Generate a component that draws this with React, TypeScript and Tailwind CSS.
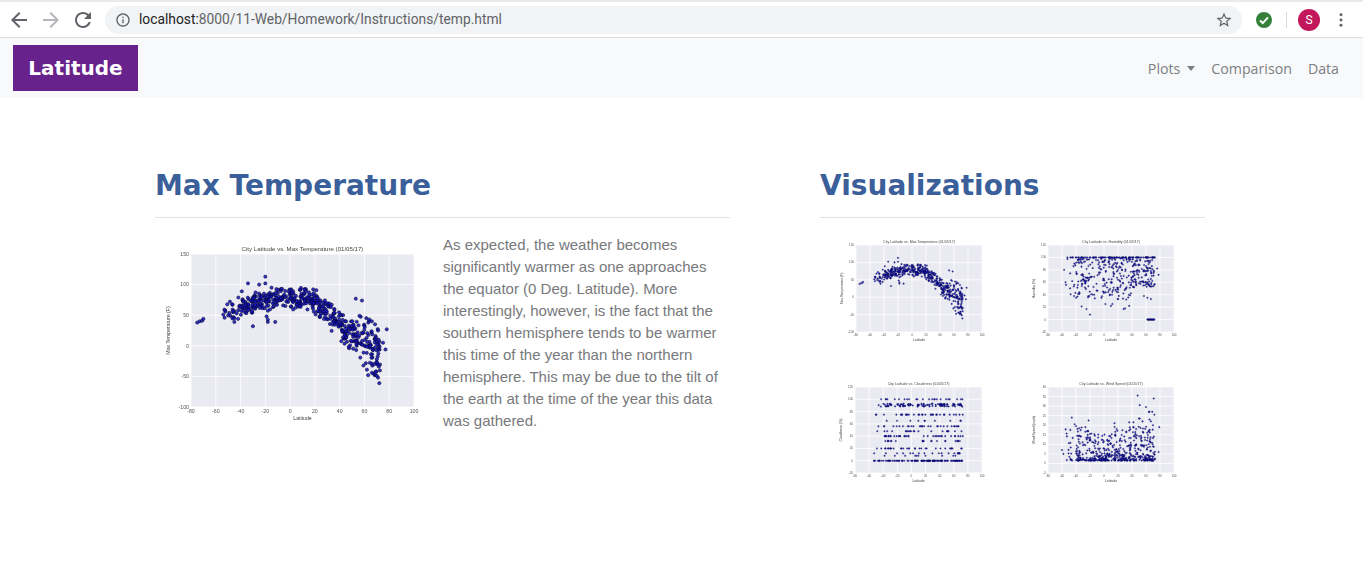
import React from "react";

type Pt = [number, number];

function rng(seed: number) {
  let a = seed * 2654435761;
  return () => {
    a = (a + 0x6d2b79f5) | 0;
    let t = Math.imul(a ^ (a >>> 15), 1 | a);
    t = (t + Math.imul(t ^ (t >>> 7), 61 | t)) ^ t;
    return ((t ^ (t >>> 14)) >>> 0) / 4294967296;
  };
}

function lats(seed: number, n: number): number[] {
  const r = rng(seed);
  const out: number[] = [];
  for (let i = 0; i < n; i++) {
    const u = r();
    let v: number;
    if (u < 0.04) v = -55 + r() * 15;
    else if (u < 0.25) v = -40 + r() * 25;
    else if (u < 0.47) v = -15 + r() * 30;
    else if (u < 0.72) v = 15 + r() * 30;
    else v = 45 + r() * 28;
    out.push(v);
  }
  return out;
}

function curve(x: number): number {
  const a: Pt[] = [[-75, 38], [-60, 50], [-45, 60], [-30, 70], [-15, 75], [0, 78], [15, 76], [25, 66], [35, 46], [45, 27], [55, 14], [65, 3], [72, -15]];
  for (let i = 0; i < a.length - 1; i++) {
    if (x <= a[i + 1][0]) {
      const t = (x - a[i][0]) / (a[i + 1][0] - a[i][0]);
      return a[i][1] + t * (a[i + 1][1] - a[i][1]);
    }
  }
  return -15;
}

function tempData(): Pt[] {
  const r = rng(11);
  const pts: Pt[] = lats(5, 500).map((x) => {
    const spread = x > 55 ? 50 : x > 40 ? 30 : x > 20 ? 26 : 20;
    return [x, curve(x) + (r() + r() - 1) * spread];
  });
  const extra: Pt[] = [[-75, 38], [-73, 40], [-71, 41], [-70, 44], [-46, 55], [-46, 56], [-45, 45], [-45, 39], [-42, 44], [-39, 89], [-34, 102], [-25, 100], [-20, 113], [-20, 102], [-30, 32], [-19, 48], [-18, 43], [-18, 39], [-12, 39], [-15, 95], [53, 77], [58, 74], [56, 49], [64, 43], [66, 40], [78, 27], [77, -6], [75, 5], [72, -61], [71, -52], [70, -49], [69, -42], [66, -44], [63, -48], [62, -39], [70, -27], [70, -22], [71, 25]];
  return pts.concat(extra);
}

function humidityData(): Pt[] {
  const r = rng(23);
  const pts: Pt[] = lats(8, 440).map((x) => {
    const u = r();
    let y: number;
    if (u < 0.2) y = 100;
    else if (x > 40) y = 52 + r() * 46;
    else y = 100 - Math.pow(r(), 1.4) * 68;
    return [x, y];
  });
  for (let i = 0; i < 16; i++) pts.push([62 + (i * 10) / 15, 0]);
  const extra: Pt[] = [[-20, 8], [-25, 17], [-32, 21], [-40, 35], [-38, 37], [-35, 42], [2, 25], [10, 22], [12, 25], [28, 17], [30, 18], [36, 22], [-55, 60], [-57, 80], [-48, 100], [78, 72], [76, 82], [67, 33], [62, 35], [57, 38]];
  return pts.concat(extra);
}

function cloudData(): Pt[] {
  const r = rng(37);
  const rows: [number, number][] = [[0, 0.26], [8, 0.03], [12, 0.03], [20, 0.07], [32, 0.04], [40, 0.08], [48, 0.05], [56, 0.05], [65, 0.03], [75, 0.09], [90, 0.23], [100, 0.04]];
  return lats(17, 440).map((x) => {
    let u = r();
    let y = 0;
    for (const [v, w] of rows) {
      y = v;
      if (u < w) break;
      u -= w;
    }
    return [x, y === 90 ? 88 + r() * 5 : y];
  });
}

function windData(): Pt[] {
  const r = rng(51);
  const pts: Pt[] = lats(29, 520).map((x) => {
    const base = Math.pow(r(), 2.2);
    return [x, 1.5 + base * (x > -15 && x < 15 ? 14 : 18)];
  });
  const extra: Pt[] = [[48, 35.5], [51, 30.5], [60, 29.5], [71, 34], [64, 27], [65, 27], [69, 27], [72, 25.5], [50, 23.5], [51, 23.5], [-46, 24], [-22, 22.5], [15, 21], [36, 21.5], [42, 21.5], [55, 22], [65, 23], [67, 22], [70, 20], [79, 19], [-42, 20.5], [-40, 19.5], [-38, 18], [-60, 7], [-58, 5], [78, 6]];
  return pts.concat(extra);
}

type ChartProps = {
  w: number;
  h: number;
  box: [number, number, number, number];
  xr: [number, number];
  yr: [number, number];
  xt: number[];
  yt: number[];
  title: string;
  xl: string;
  yl: string;
  pts: Pt[];
  r: number;
  fs: number;
  tfs: number;
  lfs: number;
  blurClass: string;
};

function Chart({ w, h, box, xr, yr, xt, yt, title, xl, yl, pts, r, fs, tfs, lfs, blurClass }: ChartProps) {
  const [x0, y0, x1, y1] = box;
  const sx = (v: number) => x0 + ((v - xr[0]) / (xr[1] - xr[0])) * (x1 - x0);
  const sy = (v: number) => y1 - ((v - yr[0]) / (yr[1] - yr[0])) * (y1 - y0);
  const font = "'Liberation Sans', Arial, sans-serif";
  return (
    <svg width={w} height={h} viewBox={`0 0 ${w} ${h}`} className={`block shrink-0 ${blurClass}`}>
      <rect x={x0} y={y0} width={x1 - x0} height={y1 - y0} fill="#eaeaf2" />
      {xt.map((t) => (
        <line key={t} x1={sx(t)} x2={sx(t)} y1={y0} y2={y1} stroke="#ffffff" strokeWidth={0.8} />
      ))}
      {yt.map((t) => (
        <line key={t} x1={x0} x2={x1} y1={sy(t)} y2={sy(t)} stroke="#ffffff" strokeWidth={0.8} />
      ))}
      {pts.map((p, i) => (
        <circle key={i} cx={sx(p[0])} cy={sy(p[1])} r={r} fill="#1414c4" fillOpacity={0.85} stroke="#06062e" strokeWidth={r * 0.35} />
      ))}
      <g fontFamily={font} fill="#555555" fontSize={fs}>
        {xt.map((t) => (
          <text key={t} x={sx(t)} y={y1 + fs + 1} textAnchor="middle">
            {t}
          </text>
        ))}
        {yt.map((t) => (
          <text key={t} x={x0 - 2} y={sy(t) + fs * 0.35} textAnchor="end">
            {t}
          </text>
        ))}
      </g>
      <text x={(x0 + x1) / 2} y={y0 - (tfs > 4 ? 3 : 2)} textAnchor="middle" fontFamily={font} fontSize={tfs} fill="#444444">
        {title}
      </text>
      <text x={(x0 + x1) / 2} y={y1 + fs + lfs + 3} textAnchor="middle" fontFamily={font} fontSize={lfs} fill="#444444">
        {xl}
      </text>
      <text
        transform={`translate(${x0 - fs * 3.6 - 2} ${(y0 + y1) / 2}) rotate(-90)`}
        textAnchor="middle"
        fontFamily={font}
        fontSize={lfs}
        fill="#444444"
      >
        {yl}
      </text>
    </svg>
  );
}

const latTicks = [-80, -60, -40, -20, 0, 20, 40, 60, 80, 100];

function MaterialIcon({ d, className }: { d: string; className: string }) {
  return (
    <svg viewBox="0 0 24 24" className={className} fill="currentColor">
      <path d={d} />
    </svg>
  );
}

export default function App() {
  const temp = tempData();
  const hum = humidityData();
  const cloud = cloudData();
  const wind = windData();
  const small = { w: 180, h: 115, r: 0.8, fs: 3, tfs: 3.6, lfs: 3.4, xr: [-80, 100] as [number, number], xt: latTicks, blurClass: "blur-[0.5px]" };
  return (
    <div className="min-h-[575px] w-[1363px] overflow-hidden bg-white font-['Liberation_Sans',Arial,sans-serif]">
      {/* browser bar */}
      <div className="flex h-[38px] items-center border-t-2 border-b border-t-[#e8eaed] border-b-[#dadce0] bg-white">
        <div className="flex w-[105px] shrink-0 items-center pl-[7px]">
          <MaterialIcon className="h-6 w-6 text-[#5f6368]" d="M20 11H7.83l5.59-5.59L12 4l-8 8 8 8 1.41-1.41L7.83 13H20v-2z" />
          <MaterialIcon className="ml-[8px] h-6 w-6 text-[#b4b6b9]" d="M12 4l-1.41 1.41L16.17 11H4v2h12.17l-5.58 5.59L12 20l8-8z" />
          <MaterialIcon className="ml-[8px] h-6 w-6 text-[#5f6368]" d="M17.65 6.35C16.2 4.9 14.21 4 12 4c-4.42 0-7.99 3.58-7.99 8s3.57 8 7.99 8c3.73 0 6.84-2.55 7.73-6h-2.08c-.82 2.33-3.04 4-5.65 4-3.31 0-6-2.69-6-6s2.69-6 6-6c1.66 0 3.14.69 4.22 1.78L13 11h7V4l-2.35 2.35z" />
        </div>
        <div className="flex h-[28px] w-[1137px] shrink-0 items-center rounded-full bg-[#f1f3f4] pl-[10px] pr-[9px]">
          <MaterialIcon className="h-[16px] w-[16px] text-[#5f6368]" d="M11 7h2v2h-2zm0 4h2v6h-2zm1-9C6.48 2 2 6.48 2 12s4.48 10 10 10 10-4.48 10-10S17.52 2 12 2zm0 18c-4.41 0-8-3.59-8-8s3.59-8 8-8 8 3.59 8 8-3.59 8-8 8z" />
          <span className="ml-[8px] font-['Roboto',sans-serif] text-[13.8px] text-[#5f6368]">
            <span className="text-[#202124]">localhost:</span>8000/11-Web/Homework/Instructions/temp.html
          </span>
          <MaterialIcon className="ml-auto h-[18px] w-[18px] text-[#5f6368]" d="M22 9.24l-7.19-.62L12 2 9.19 8.63 2 9.24l5.46 4.73L5.82 21 12 17.27 18.18 21l-1.63-7.03L22 9.24zM12 15.4l-3.76 2.27 1-4.28-3.32-2.88 4.38-.38L12 6.1l1.71 4.04 4.38.38-3.32 2.88 1 4.28L12 15.4z" />
        </div>
        <div className="flex flex-1 items-center pl-[14px]">
          <svg viewBox="0 0 16 16" className="h-4 w-4">
            <circle cx="8" cy="8" r="8" fill="#34813a" />
            <path d="M4 8.5l2.8 2.6L12 5.4" fill="none" stroke="#ffffff" strokeWidth="2" />
          </svg>
          <div className="ml-[14px] h-[16px] w-px bg-[#dadce0]" />
          <div className="ml-[11px] flex h-[22px] w-[22px] items-center justify-center rounded-full bg-[#c2185b] font-['Roboto',sans-serif] text-[12px] text-white">
            S
          </div>
          <svg viewBox="0 0 4 16" className="ml-[19px] h-[14px] w-[4px] text-[#5f6368]" fill="currentColor">
            <circle cx="2" cy="2" r="1.7" />
            <circle cx="2" cy="8" r="1.7" />
            <circle cx="2" cy="14" r="1.7" />
          </svg>
        </div>
      </div>

      {/* navbar */}
      <nav className="flex h-[60px] items-center bg-[#f8f9fa] pl-[13px] pr-[24px]">
        <div className="flex h-[46px] w-[125px] items-center justify-center bg-[#68228b] font-['DejaVu_Sans',sans-serif] text-[20px] font-bold text-white">
          Latitude
        </div>
        <div className="ml-auto mt-[2px] flex items-center font-['Open_Sans',sans-serif] text-[14.2px] text-[#7b7f84]">
          <span>Plots</span>
          <span className="ml-[7px] h-0 w-0 border-x-[4.5px] border-t-[5px] border-x-transparent border-t-[#7b7f84]" />
          <span className="ml-[16px]">Comparison</span>
          <span className="ml-[16px]">Data</span>
        </div>
      </nav>

      {/* content */}
      <main className="flex pl-[155px] pt-[65px]">
        <section className="w-[575px]">
          <h1 className="h-[54px] font-['DejaVu_Sans',sans-serif] text-[28px] leading-[46px] font-bold text-[#3a5f9a]">Max Temperature</h1>
          <hr className="border-t border-[#e3e3e3]" />
          <div className="mt-[17px] flex">
            <Chart
              w={280}
              h={200}
              box={[36, 19, 259, 172]}
              xr={[-80, 100]}
              yr={[-100, 150]}
              xt={latTicks}
              yt={[-100, -50, 0, 50, 100, 150]}
              title="City Latitude vs. Max Temperature (01/05/17)"
              xl="Latitude"
              yl="Max Temperature (F)"
              pts={temp}
              r={1.6}
              fs={5.2}
              tfs={6.1}
              lfs={5.2}
              blurClass="blur-[0.35px]"
            />
            <p className="ml-[8px] mt-[-1px] w-[287px] text-[15px] leading-[22px] text-[#77797c]">
              As expected, the weather becomes significantly warmer as one approaches the equator (0 Deg. Latitude). More interestingly, however, is the fact that the southern hemisphere tends to be warmer this time of the year than the northern hemisphere. This may be due to the tilt of the earth at the time of the year this data was gathered.
            </p>
          </div>
        </section>
        <section className="ml-[90px] w-[385px]">
          <h1 className="h-[54px] font-['DejaVu_Sans',sans-serif] text-[28px] leading-[46px] font-bold text-[#3a5f9a]">Visualizations</h1>
          <hr className="border-t border-[#e3e3e3]" />
          <div className="mt-[17px] grid grid-cols-[180px_180px] gap-x-[15px] gap-y-[28px] pl-[10px]">
            <Chart {...small} box={[26, 10, 152, 97]} yr={[-100, 150]} yt={[-100, -50, 0, 50, 100, 150]} title="City Latitude vs. Max Temperature (01/05/17)" xl="Latitude" yl="Max Temperature (F)" pts={temp} />
            <Chart {...small} box={[23, 10, 149, 97]} yr={[-20, 120]} yt={[-20, 0, 20, 40, 60, 80, 100, 120]} title="City Latitude vs. Humidity (01/05/17)" xl="Latitude" yl="Humidity (%)" pts={hum} />
            <Chart {...small} box={[25, 9, 152, 95]} yr={[-20, 120]} yt={[-20, 0, 20, 40, 60, 80, 100, 120]} title="City Latitude vs. Cloudiness (01/05/17)" xl="Latitude" yl="Cloudiness (%)" pts={cloud} />
            <Chart {...small} box={[23, 9, 149, 95]} yr={[-5, 40]} yt={[-5, 0, 5, 10, 15, 20, 25, 30, 35, 40]} title="City Latitude vs. Wind Speed (01/05/17)" xl="Latitude" yl="Wind Speed (mph)" pts={wind} />
          </div>
        </section>
      </main>
    </div>
  );
}
